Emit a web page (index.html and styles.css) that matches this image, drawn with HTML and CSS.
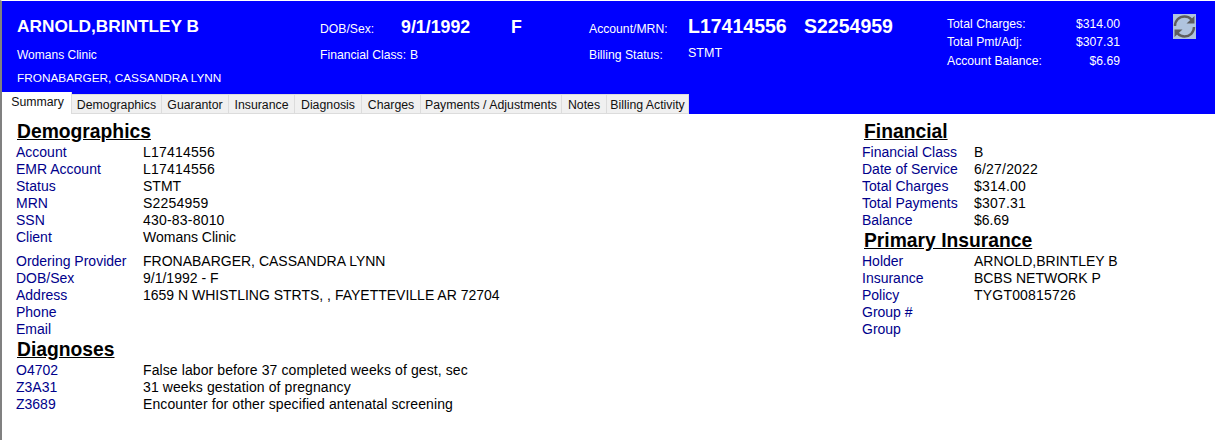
FILE: index.html
```html
<!DOCTYPE html>
<html lang="en">
<head>
<meta charset="utf-8">
<title>Account Summary</title>
<link rel="stylesheet" href="styles.css">
</head>
<body>
<div class="window">
  <header class="banner">
    <div class="patient">
      <div class="name">ARNOLD,BRINTLEY B</div>
      <div class="clinic">Womans Clinic</div>
      <div class="provider">FRONABARGER, CASSANDRA LYNN</div>
    </div>
    <div class="dob">
      <div class="line-a"><span class="lbl dob-lbl">DOB/Sex:</span><span class="big dob-val">9/1/1992</span><span class="big">F</span></div>
      <div class="line-b"><span class="lbl">Financial Class:</span><span class="lbl fc">B</span></div>
    </div>
    <div class="acct">
      <div class="line-a"><span class="lbl acct-lbl">Account/MRN:</span><span class="big bold acct-val">L17414556</span><span class="big bold">S2254959</span></div>
      <div class="line-b"><span class="lbl acct-lbl">Billing Status:</span><span class="stmt">STMT</span></div>
    </div>
    <div class="totals">
      <div class="tot"><span>Total Charges:</span><span>$314.00</span></div>
      <div class="tot"><span>Total Pmt/Adj:</span><span>$307.31</span></div>
      <div class="tot tot-last"><span>Account Balance:</span><span>$6.69</span></div>
    </div>
    <div class="refresh">
      <svg width="23" height="25" viewBox="0 0 23 25" aria-hidden="true">
        <rect width="23" height="25" fill="#b0c4de"/>
        <path d="M2 12C2 6.500 6.200 2.500 11.500 2.500c2.800 0 5 1 6.800 2.800" fill="none" stroke="#5e5e5e" stroke-width="2.400"/>
        <path d="M21 13C21 18.500 16.800 22.500 11.500 22.500c-2.800 0-5-1-6.800-2.800" fill="none" stroke="#5e5e5e" stroke-width="2.400"/>
        <path d="M13.500 9.500h8v-7.500z" fill="#5e5e5e"/>
        <path d="M9.500 15.500h-8v7.500z" fill="#5e5e5e"/>
      </svg>
    </div>
  </header>
  <nav class="tabs">
    <span class="tab active">Summary</span>
    <span class="tab">Demographics</span>
    <span class="tab">Guarantor</span>
    <span class="tab">Insurance</span>
    <span class="tab">Diagnosis</span>
    <span class="tab">Charges</span>
    <span class="tab">Payments / Adjustments</span>
    <span class="tab">Notes</span>
    <span class="tab">Billing Activity</span>
  </nav>
  <main class="content">
    <section class="left">
      <h2>Demographics</h2>
      <dl class="rows">
        <dt>Account</dt><dd class="num">L17414556</dd>
        <dt>EMR Account</dt><dd class="num">L17414556</dd>
        <dt>Status</dt><dd>STMT</dd>
        <dt>MRN</dt><dd class="num">S2254959</dd>
        <dt>SSN</dt><dd class="num">430-83-8010</dd>
        <dt>Client</dt><dd>Womans Clinic</dd>
      </dl>
      <dl class="rows second">
        <dt>Ordering Provider</dt><dd>FRONABARGER, CASSANDRA LYNN</dd>
        <dt>DOB/Sex</dt><dd>9/1/1992 - F</dd>
        <dt>Address</dt><dd>1659 N WHISTLING STRTS, , FAYETTEVILLE AR 72704</dd>
        <dt>Phone</dt><dd></dd>
        <dt>Email</dt><dd></dd>
      </dl>
      <h2>Diagnoses</h2>
      <dl class="rows diag">
        <dt>O4702</dt><dd>False labor before 37 completed weeks of gest, sec</dd>
        <dt>Z3A31</dt><dd>31 weeks gestation of pregnancy</dd>
        <dt>Z3689</dt><dd>Encounter for other specified antenatal screening</dd>
      </dl>
    </section>
    <section class="right">
      <h2>Financial</h2>
      <dl class="rows">
        <dt>Financial Class</dt><dd>B</dd>
        <dt>Date of Service</dt><dd class="num">6/27/2022</dd>
        <dt>Total Charges</dt><dd class="num">$314.00</dd>
        <dt>Total Payments</dt><dd class="num">$307.31</dd>
        <dt>Balance</dt><dd>$6.69</dd>
      </dl>
      <h2>Primary Insurance</h2>
      <dl class="rows">
        <dt>Holder</dt><dd>ARNOLD,BRINTLEY B</dd>
        <dt>Insurance</dt><dd>BCBS NETWORK P</dd>
        <dt>Policy</dt><dd class="num">TYGT00815726</dd>
        <dt>Group #</dt><dd></dd>
        <dt>Group</dt><dd></dd>
      </dl>
    </section>
  </main>
</div>
</body>
</html>
```
FILE: styles.css
```css
* { box-sizing: border-box; }
html, body { margin: 0; padding: 0; }
body {
  width: 1215px;
  height: 440px;
  overflow: hidden;
  background: #fff;
  font-family: "Liberation Sans", Arial, sans-serif;
}
.window {
  height: 440px;
  border-left: 2px solid #808080;
  border-top: 1px solid #fff;
  background: #fff;
}
.banner {
  height: 93px;
  background: #0000ff;
  color: #fff;
  display: flex;
  font-size: 12.2px;
}
.patient { width: 318px; padding: 15px 0 0 15px; }
.name { font-size: 17.3px; font-weight: bold; line-height: 20px; }
.clinic { margin-top: 12px; line-height: 14px; font-size: 12px; }
.provider { margin-top: 9px; line-height: 14px; font-size: 11.8px; }
.dob { width: 269px; padding-top: 17px; }
.acct { width: 358px; padding-top: 17px; }
.line-a { display: flex; align-items: center; height: 20px; }
.line-b { display: flex; align-items: center; height: 14px; margin-top: 11px; }
.lbl { line-height: 14px; position: relative; top: 1px; }
.line-b .lbl { top: -1px; }
.dob-lbl { width: 81px; }
.dob-val { width: 110px; }
.fc { margin-left: 4px; }
.big { font-size: 17.8px; line-height: 20px; font-weight: bold; position: relative; top: -1px; }
.bold { font-size: 19.5px; top: -2px; }
.acct-lbl { width: 99px; }
.acct-val { width: 116px; }
.stmt { position: relative; top: -3px; font-size: 12.5px; }
.totals { width: 173px; padding-top: 16px; }
.tot { display: flex; justify-content: space-between; line-height: 14px; height: 18px; }
.tot-last { margin-top: 1px; }
.refresh { margin-left: 53px; padding-top: 13px; line-height: 0; }
.tabs {
  display: flex;
  align-items: flex-end;
  height: 20px;
  background: #0000ff;
  font-size: 12.3px;
  color: #111;
}
.tab {
  height: 20px;
  line-height: 20px;
  flex: 0 0 auto;
  text-align: center;
  background: #f0f0f0;
  border-right: 1px solid #dcdcdc;
  border-top: 1px solid #dcdcdc;
  border-bottom: 1px solid #dcdcdc;
  white-space: nowrap;
}
.tab:nth-child(1) { width: 70px; }
.tab:nth-child(2) { width: 90px; }
.tab:nth-child(3) { width: 67px; }
.tab:nth-child(4) { width: 66px; }
.tab:nth-child(5) { width: 67px; }
.tab:nth-child(6) { width: 59px; }
.tab:nth-child(7) { width: 141px; }
.tab:nth-child(8) { width: 45px; }
.tab:nth-child(9) { width: 82px; }
.tab.active {
  height: 22px;
  line-height: 20px;
  background: #fff;
  border: 0;
  border-right: 1px solid #dcdcdc;
  padding: 0 0 2px 2px;
}
.content { display: flex; }
.left { width: 860px; padding-left: 14px; }
.right { flex: 1; }
h2 {
  margin: 0;
  font-size: 19.3px;
  line-height: 24px;
  font-weight: bold;
  color: #000;
  text-decoration: underline;
  padding-left: 1px;
}
.right h2 { padding-left: 2px; }
.left > h2:first-child, .right > h2:first-child { margin-top: 6px; }
.rows {
  margin: 0;
  display: grid;
  grid-template-columns: 127px 1fr;
  grid-auto-rows: 17px;
  font-size: 14px;
  line-height: 17px;
}
.right .rows { grid-template-columns: 112px 1fr; }
.second { margin-top: 7px; }
dt { color: #00008b; margin: 0; }
dd { color: #000; margin: 0; }
.num { letter-spacing: 0.2px; }
.diag dd { letter-spacing: 0.1px; }
```
